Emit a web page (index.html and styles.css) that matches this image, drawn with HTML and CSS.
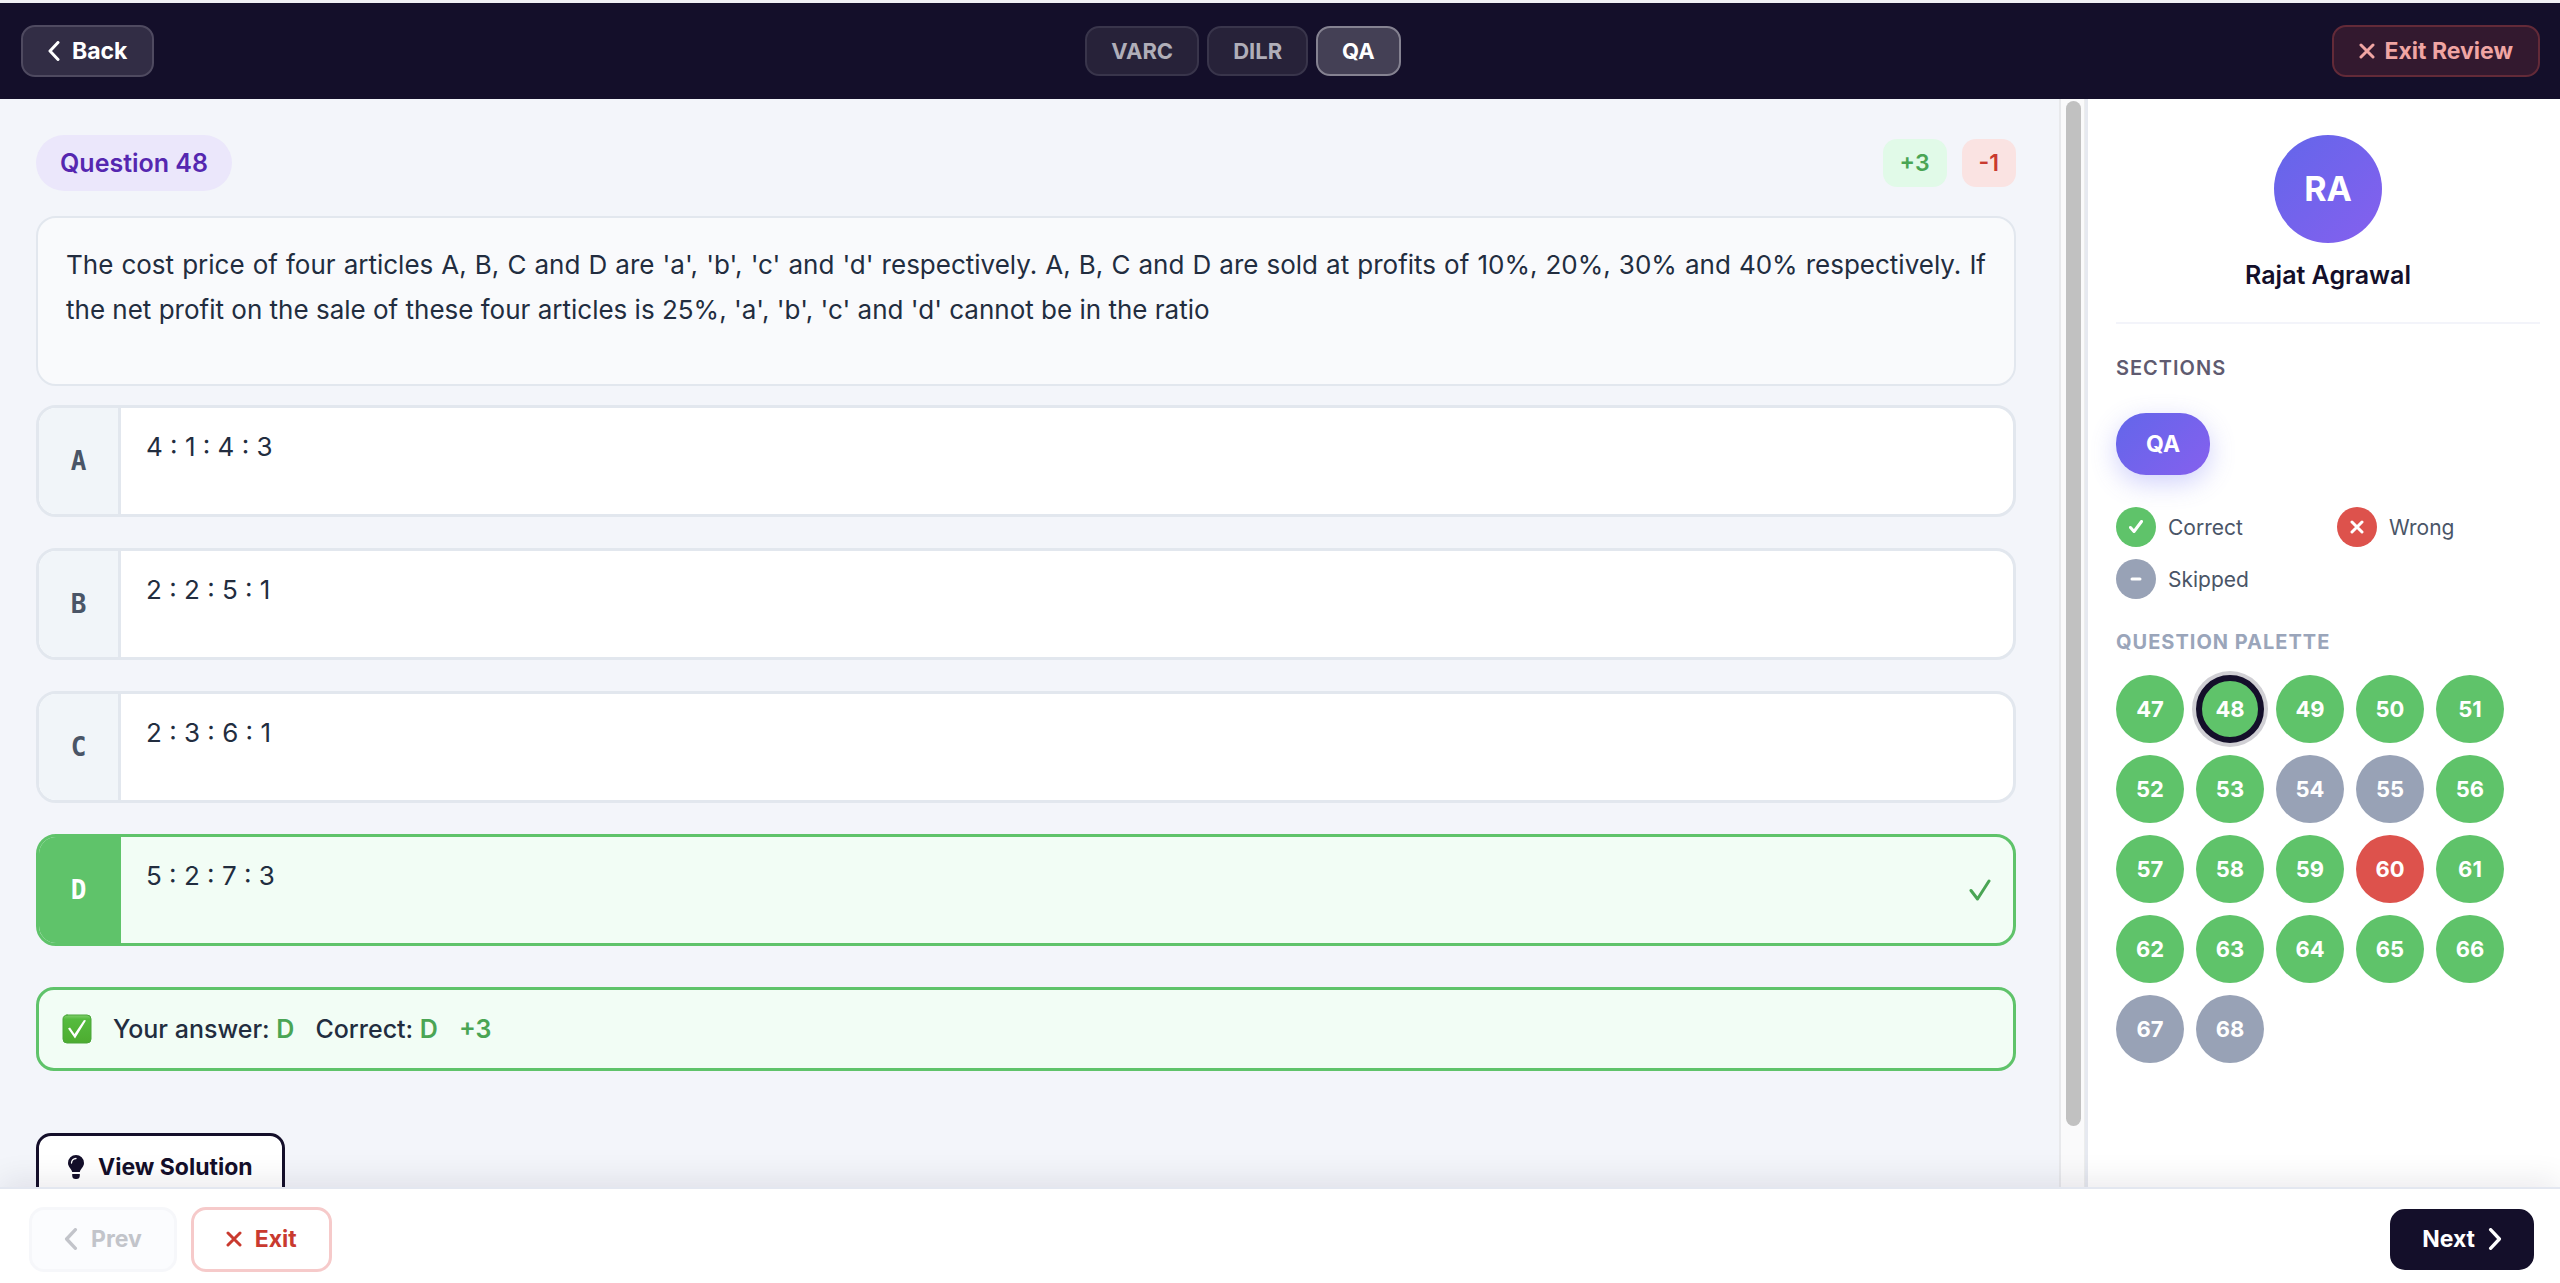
FILE: index.html
```html
<!DOCTYPE html>
<html lang="en">
<head>
<meta charset="utf-8">
<title>Question 48 – Review</title>
<link rel="stylesheet" href="styles.css">
</head>
<body>
<header class="topbar">
  <button class="top-btn back" type="button">
    <svg class="chev-sm" viewBox="0 0 12 20"><path d="M10 1.500 2 10l8 8.500"/></svg>Back
  </button>
  <nav class="tabs" aria-label="Sections">
    <button class="tab" type="button">VARC</button>
    <button class="tab" type="button">DILR</button>
    <button class="tab active" type="button">QA</button>
  </nav>
  <button class="top-btn exit-review" type="button">
    <svg class="cross" viewBox="0 0 16 16"><path d="M2 2l12 12M14 2 2 14"/></svg>Exit Review
  </button>
</header>

<div class="workspace">
  <main class="question-pane">
    <div class="question-head">
      <h1 class="question-no">Question 48</h1>
      <div class="marks">
        <span class="mark plus">+3</span>
        <span class="mark minus">-1</span>
      </div>
    </div>

    <section class="question-box">
      <p>The cost price of four articles A, B, C and D are 'a', 'b', 'c' and 'd' respectively. A, B, C and D are sold at profits of 10%, 20%, 30% and 40% respectively. If the net profit on the sale of these four articles is 25%, 'a', 'b', 'c' and 'd' cannot be in the ratio</p>
    </section>

    <ul class="options">
      <li class="option"><span class="letter">A</span><p class="choice">4 : 1 : 4 : 3</p></li>
      <li class="option"><span class="letter">B</span><p class="choice">2 : 2 : 5 : 1</p></li>
      <li class="option"><span class="letter">C</span><p class="choice">2 : 3 : 6 : 1</p></li>
      <li class="option correct"><span class="letter">D</span><p class="choice">5 : 2 : 7 : 3</p>
        <svg class="tick" viewBox="0 0 22 22"><path d="M2 11.500 8.500 20 20 2"/></svg></li>
    </ul>

    <div class="result">
      <svg class="result-icon" viewBox="0 0 30 30">
        <defs><linearGradient id="g" x1="0" y1="0" x2="0" y2="1"><stop offset="0" stop-color="#7fcf6a"/><stop offset=".15" stop-color="#55bb3e"/><stop offset="1" stop-color="#4dac30"/></linearGradient></defs>
        <rect x="1" y="1" width="28" height="28" rx="4" fill="url(#g)" stroke="#4aa53a"/>
        <path d="M6 14.500l2-1 4.500 6.500L22 6l2 .5L13 24.500z" fill="#fff"/>
      </svg>
      <span>Your answer: <strong>D</strong></span>
      <span>Correct: <strong>D</strong></span>
      <strong>+3</strong>
    </div>

    <button class="solution" type="button">
      <svg class="bulb" viewBox="0 0 16 24"><path d="M8 0a8 8 0 0 0-8 8c0 4 3.500 5.500 4.200 9h7.600C12.500 13.500 16 12 16 8a8 8 0 0 0-8-8z" fill="#140f2a"/><path d="M3.500 8A4.500 4.500 0 0 1 8 3.500" fill="none" stroke="#fff" stroke-width="1.300" stroke-linecap="round"/><path d="M4.200 19h7.600v1.500a3.500 3.500 0 0 1-3.500 3.500h-.6a3.500 3.500 0 0 1-3.500-3.500z" fill="#140f2a"/></svg>View Solution
    </button>
  </main>

  <div class="scroll-track"><div class="scroll-thumb"></div></div>

  <aside class="sidebar">
    <div class="profile">
      <div class="avatar">RA</div>
      <div class="name">Rajat Agrawal</div>
    </div>
    <h2 class="side-title">SECTIONS</h2>
    <button class="section-pill" type="button">QA</button>
    <ul class="legend">
      <li><span class="dot ok"><svg viewBox="0 0 14 14"><path d="M1.500 7.500 5 11.500 12.500 1.500"/></svg></span>Correct</li>
      <li><span class="dot bad"><svg viewBox="0 0 14 14"><path d="M2 2l10 10M12 2 2 12"/></svg></span>Wrong</li>
      <li><span class="dot skip"><svg viewBox="0 0 14 14"><path d="M3 7h8"/></svg></span>Skipped</li>
    </ul>
    <h2 class="side-title muted">QUESTION PALETTE</h2>
    <div class="palette">
      <button class="q ok" type="button">47</button>
      <button class="q ok current" type="button">48</button>
      <button class="q ok" type="button">49</button>
      <button class="q ok" type="button">50</button>
      <button class="q ok" type="button">51</button>
      <button class="q ok" type="button">52</button>
      <button class="q ok" type="button">53</button>
      <button class="q skip" type="button">54</button>
      <button class="q skip" type="button">55</button>
      <button class="q ok" type="button">56</button>
      <button class="q ok" type="button">57</button>
      <button class="q ok" type="button">58</button>
      <button class="q ok" type="button">59</button>
      <button class="q bad" type="button">60</button>
      <button class="q ok" type="button">61</button>
      <button class="q ok" type="button">62</button>
      <button class="q ok" type="button">63</button>
      <button class="q ok" type="button">64</button>
      <button class="q ok" type="button">65</button>
      <button class="q ok" type="button">66</button>
      <button class="q skip" type="button">67</button>
      <button class="q skip" type="button">68</button>
    </div>
  </aside>
</div>

<footer class="bottombar">
  <button class="foot-btn prev" type="button" disabled>
    <svg class="chev" viewBox="0 0 12 20"><path d="M10 1.500 2 10l8 8.500"/></svg>Prev
  </button>
  <button class="foot-btn exit" type="button">
    <svg class="cross" viewBox="0 0 16 16"><path d="M2 2l12 12M14 2 2 14"/></svg>Exit
  </button>
  <button class="foot-btn next" type="button">Next
    <svg class="chev" viewBox="0 0 12 20"><path d="M2 1.500 10 10l-8 8.500"/></svg>
  </button>
</footer>
</body>
</html>
```

FILE: styles.css
```css
:root {
  --ink: #140f2a;
  --green: #5fc36a;
  --green-text: #4aa554;
  --red: #dd524c;
  --red-text: #c93a2f;
  --slate: #98a2b6;
  --line: #e2e7ee;
  --grad: linear-gradient(135deg, #6366ea, #8560ee);
}

* { box-sizing: border-box; }

body {
  margin: 0;
  height: 100vh;
  display: flex;
  flex-direction: column;
  overflow: hidden;
  background: #f3f5fa;
  color: #222d3f;
  font-family: Inter, "Liberation Sans", sans-serif;
  font-size: 23px;
}

h1, h2, p, ul { margin: 0; padding: 0; }
ul { list-style: none; }
button { font: inherit; font-weight: 700; margin: 0; padding: 0; border: 0; }
svg { flex: none; fill: none; stroke-linecap: round; stroke-linejoin: round; }

/* top bar */
.topbar {
  flex: none;
  display: flex;
  align-items: center;
  justify-content: space-between;
  height: 99px;
  padding: 0 20px 0 21px;
  border-top: 3px solid #f0f0f4;
  background: var(--ink);
}
.top-btn {
  display: flex;
  align-items: center;
  gap: 12px;
  height: 52px;
  padding: 0 25px;
  border: 2px solid;
  border-radius: 14px;
}
.top-btn svg, .foot-btn svg { stroke: currentColor; stroke-width: 3; }
.back { color: #fff; background: #322d45; border-color: #4f4a60; }
.exit-review { gap: 10px; color: #f0a5a3; background: #33192f; border-color: #632a38; }
.chev-sm { width: 12px; height: 20px; }
.chev { width: 14px; height: 22px; }
.cross { width: 16px; height: 16px; }

.tabs { display: flex; gap: 8px; }
.tab {
  height: 50px;
  padding: 0 24px;
  border: 2px solid #39354b;
  border-radius: 14px;
  background: #272239;
  color: #b0aeb8;
  font-size: 22px;
}
.tab.active { background: #444055; border-color: #858291; color: #fff; }

/* workspace */
.workspace { flex: 1; min-height: 0; display: flex; overflow: hidden; }
.question-pane {
  flex: 1;
  min-width: 0;
  padding: 36px 43px 36px 36px;
  overflow: hidden;
}
.question-head {
  display: flex;
  align-items: center;
  justify-content: space-between;
  margin-bottom: 25px;
}
.question-no {
  padding: 0 24px;
  border-radius: 28px;
  background: #ebe7fb;
  color: #5527b0;
  font-size: 25px;
  font-weight: 600;
  line-height: 56px;
}
.marks { display: flex; gap: 15px; }
.mark { padding: 0 17px; border-radius: 14px; line-height: 48px; font-weight: 600; }
.plus { background: #e1fae8; color: var(--green-text); }
.minus { background: #fae3e2; color: var(--red-text); }

.question-box {
  margin-bottom: 19px;
  padding: 24px 28px;
  border: 2px solid var(--line);
  border-radius: 20px;
  background: #f9fafc;
  font-size: 26px;
  line-height: 45px;
  text-align: justify;
}
.question-box p { margin-bottom: 28px; }

.options { display: flex; flex-direction: column; gap: 31px; }
.option {
  display: flex;
  align-items: stretch;
  min-height: 112px;
  border: 3px solid var(--line);
  border-radius: 20px;
  background: #fff;
  overflow: hidden;
}
.letter {
  flex: none;
  display: flex;
  align-items: center;
  justify-content: center;
  width: 82px;
  border-right: 3px solid var(--line);
  background: #f1f5f9;
  color: #4a5567;
  font: bold 26px "DejaVu Sans Mono", monospace;
}
.choice { flex: 1; padding: 16px 25px; font-size: 26px; line-height: 45px; }
.option.correct { border-color: var(--green); background: #f2fdf5; }
.correct .letter { background: var(--green); border-color: var(--green); color: #fff; }
.tick { align-self: center; width: 22px; height: 22px; margin-right: 22px; stroke: var(--green-text); stroke-width: 3; }

.result {
  display: flex;
  align-items: center;
  gap: 21px;
  min-height: 84px;
  margin-top: 41px;
  padding: 0 23px;
  border: 3px solid var(--green);
  border-radius: 18px;
  background: #f2fdf5;
  font-size: 25px;
  font-weight: 500;
}
.result strong { color: var(--green-text); font-weight: 600; }
.result-icon { width: 30px; height: 30px; }

.solution {
  display: flex;
  align-items: center;
  gap: 14px;
  height: 68px;
  margin-top: 62px;
  padding: 0 29px;
  border: 3px solid var(--ink);
  border-radius: 15px;
  background: #fff;
  color: var(--ink);
}
.bulb { width: 16px; height: 24px; }

.scroll-track {
  flex: none;
  width: 26px;
  padding: 2px 4px 2px 5px;
  border-left: 2px solid #e8e9ec;
  border-right: 1px solid #eceded;
  background: #fafafb;
}
.scroll-thumb { width: 15px; height: 94.6%; border-radius: 8px; background: #c1c1c1; }

/* sidebar */
.sidebar {
  flex: none;
  width: 475px;
  padding: 36px 20px 0 28px;
  border-left: 3px solid #e6e9f0;
  background: #fff;
}
.profile {
  display: flex;
  flex-direction: column;
  align-items: center;
  gap: 16px;
  padding-bottom: 31px;
  border-bottom: 2px solid #f3f4fa;
}
.avatar {
  width: 108px;
  height: 108px;
  border-radius: 50%;
  background: var(--grad);
  color: #fff;
  font-size: 34px;
  font-weight: 700;
  line-height: 108px;
  text-align: center;
}
.name { color: var(--ink); font-size: 25px; font-weight: 600; line-height: 32px; }
.side-title { margin: 32px 0 33px; color: #5f5b70; font-size: 20px; font-weight: 600; line-height: 24px; letter-spacing: 1px; }
.side-title.muted { margin: 31px 0 21px; color: #9aa5ba; font-weight: 700; }
.section-pill {
  display: block;
  height: 62px;
  padding: 0 30px;
  border-radius: 30px;
  background: var(--grad);
  color: #fff;
  box-shadow: 0 8px 26px rgba(99, 102, 241, .3);
}
.legend {
  display: grid;
  grid-template-columns: 1fr 1fr;
  gap: 12px 18px;
  margin-top: 32px;
  color: #4a5567;
  font-size: 21px;
}
.legend li { display: flex; align-items: center; gap: 12px; }
.dot { display: grid; place-items: center; width: 40px; height: 40px; border-radius: 50%; }
.dot svg { width: 14px; height: 14px; stroke: #fff; stroke-width: 3; }
.ok { background: var(--green); }
.bad { background: var(--red); }
.skip { background: var(--slate); }
.palette { display: flex; flex-wrap: wrap; gap: 12px; }
.q { width: 68px; height: 68px; border-radius: 50%; color: #fff; font-size: 22px; }
.current { border: 6px solid var(--ink); box-shadow: 0 0 0 4px rgba(20, 15, 42, .2); }

/* bottom bar */
.bottombar {
  position: relative;
  flex: none;
  display: flex;
  align-items: center;
  gap: 14px;
  height: 96px;
  padding: 6px 26px 0 29px;
  border-top: 2px solid #e3e7f0;
  background: #fff;
  box-shadow: 0 -6px 30px rgba(20, 15, 42, .09);
}
.foot-btn {
  display: flex;
  align-items: center;
  gap: 13px;
  height: 65px;
  padding: 0 32px;
  border: 3px solid;
  border-radius: 15px;
  background: #fff;
}
.prev { background: #fbfcfe; border-color: #f6f7fa; color: #c2c4ca; }
.exit { border-color: #f6caca; color: var(--red-text); }
.next { height: 61px; margin-left: auto; padding: 0 29px; background: var(--ink); border-color: var(--ink); color: #fff; }
```
